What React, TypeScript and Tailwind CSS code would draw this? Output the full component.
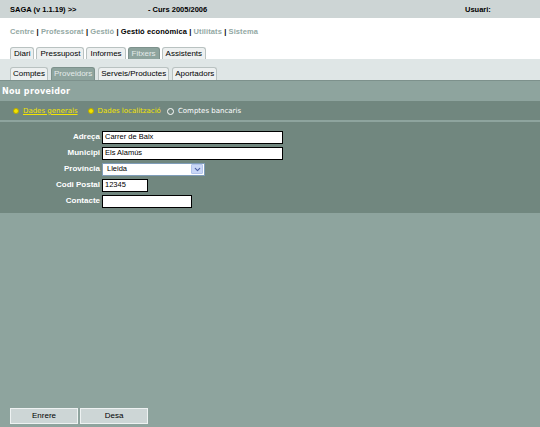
import { ChevronDown } from "lucide-react"

const verdana = "font-['DejaVu_Sans',Verdana,sans-serif]"
const arial = "font-['Liberation_Sans',Arial,sans-serif]"

const topTabs = ["Diari", "Pressupost", "Informes", "Fitxers", "Assistents"]
const subTabs = ["Comptes", "Proveidors", "Serveis/Productes", "Aportadors"]

function Tab({ label, active, h }: { label: string; active: boolean; h: string }) {
  return (
    <div
      className={`${h} flex items-center rounded-t-[3px] border border-b-0 text-[8px] ${
        active ? "border-[#7d918c] bg-[#8ea49e] text-[#e4ebea]" : "border-[#b9c2c1] bg-[#edf0f0] text-black"
      }`}
    >
      {label}
    </div>
  )
}

function Field({ label, children }: { label: string; children: React.ReactNode }) {
  return (
    <div className="flex h-[16px] items-center">
      <div className="w-[102px] pr-[2px] text-right text-[8px] font-bold text-white">{label}</div>
      {children}
    </div>
  )
}

function TextBox({ w, value }: { w: string; value: string }) {
  return (
    <div className={`${w} flex h-[13px] items-center border border-black bg-white pl-[2px] text-[7.5px] text-black`}>
      {value}
    </div>
  )
}

export default function App() {
  return (
    <div className={`${arial} flex h-[427px] w-full flex-col bg-[#8ea49e]`}>
      <div className="flex h-[18px] items-center bg-[#cdd5d5] pt-[1px] text-[7.5px] font-bold text-black">
        <span className="ml-[10px] w-[138px]">SAGA (v 1.1.19) &gt;&gt;</span>
        <span className="flex-1">- Curs 2005/2006</span>
        <span className="w-[75px]">Usuari:</span>
      </div>

      <div className="flex h-[41px] flex-col bg-white">
        <div className="ml-[10px] mt-[8px] text-[7.5px] font-bold tracking-[0.1px] text-[#93a8a3]">
          Centre <span className="text-black">|</span> Professorat <span className="text-black">|</span> Gestió{" "}
          <span className="text-black">| Gestió econòmica |</span> Utilitats <span className="text-black">|</span> Sistema
        </div>
        <div className="mt-auto ml-[10px] flex gap-[2px] [&>div]:px-[3px]">
          {topTabs.map((t) => (
            <Tab key={t} label={t} active={t === "Fitxers"} h="h-[12px]" />
          ))}
        </div>
      </div>

      <div className="flex h-[22px] items-end border-b border-[#7d918c] bg-[#dfe6e6]">
        <div className="ml-[10px] flex gap-[3px] [&>div]:px-[2px]">
          {subTabs.map((t) => (
            <Tab key={t} label={t} active={t === "Proveidors"} h="h-[13px]" />
          ))}
        </div>
      </div>

      <div className={`${verdana} flex h-[20px] items-center pl-[2px] pt-[2px] text-[8px] font-bold tracking-[0.3px] text-white`}>
        Nou proveidor
      </div>

      <div className={`${verdana} flex h-[19px] items-center bg-[#71877f] pl-[13px] pt-[1px] text-[7px]`}>
        <span className="mr-[4px] h-[6px] w-[6px] rounded-full border border-[#b7a800] bg-[#f2e400]" />
        <span className="text-[#f2e400] underline">Dades generals</span>
        <span className="ml-[10px] mr-[4px] h-[6px] w-[6px] rounded-full border border-[#b7a800] bg-[#f2e400]" />
        <span className="text-[#f2e400]">Dades localització</span>
        <span className="ml-[6px] mr-[4px] h-[7px] w-[7px] rounded-full border border-white" />
        <span className="text-white">Comptes bancaris</span>
      </div>

      <div className="mt-[2px] flex flex-col bg-[#71877f] pt-[7px] pb-[4px]">
        <Field label="Adreça">
          <TextBox w="w-[181px]" value="Carrer de Baix" />
        </Field>
        <Field label="Municipi">
          <TextBox w="w-[181px]" value="Els Alamús" />
        </Field>
        <Field label="Província">
          <div className="flex h-[13px] w-[103px] items-center border border-[#7f9db9] bg-white pl-[4px] text-[7.5px] text-black">
            <span className="flex-1">Lleida</span>
            <span className="mr-[1px] flex h-[10px] w-[12px] items-center justify-center rounded-[1px] border border-[#b3c4ec] bg-[#c9d7f7]">
              <ChevronDown size={9} strokeWidth={3} className="text-[#4d61a7]" />
            </span>
          </div>
        </Field>
        <Field label="Codi Postal">
          <TextBox w="w-[46px]" value="12345" />
        </Field>
        <Field label="Contacte">
          <TextBox w="w-[90px]" value="" />
        </Field>
      </div>

      <div className="mt-auto mb-[3px] ml-[10px] flex gap-[2px]">
        <button className="h-[16px] w-[68px] border border-[#eef2f2] bg-[#cdd6d6] text-[8px] text-black">Enrere</button>
        <button className="h-[16px] w-[68px] border border-[#eef2f2] bg-[#cdd6d6] text-[8px] text-black">Desa</button>
      </div>
    </div>
  )
}
